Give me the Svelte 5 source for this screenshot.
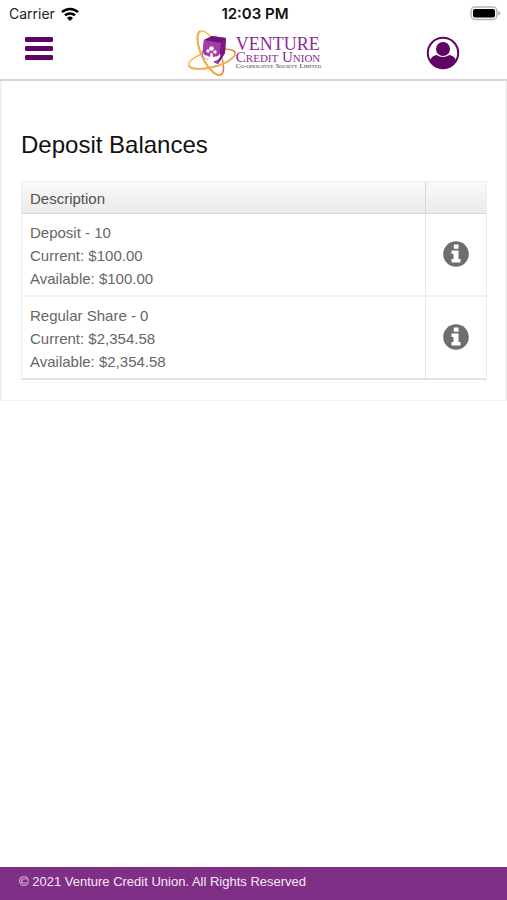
<script>
  const accounts = [
    { name: 'Deposit - 10', current: '$100.00', available: '$100.00' },
    { name: 'Regular Share - 0', current: '$2,354.58', available: '$2,354.58' }
  ];
</script>

<div class="screen">
  <div class="status">
    <div class="carrier">
      <span>Carrier</span>
      <svg width="18" height="14" viewBox="0 0 18 14" aria-hidden="true">
        <g fill="none" stroke="#000" stroke-width="2.5">
          <path d="M1 5.2a11.5 11.5 0 0 1 16 0" />
          <path d="M4 8.4a7.2 7.2 0 0 1 10 0" />
        </g>
        <path d="M9 14 6 10.9a4.4 4.4 0 0 1 6 0z" />
      </svg>
    </div>
    <time>12:03 PM</time>
    <svg class="battery" width="31" height="15" viewBox="0 0 31 15" aria-hidden="true">
      <rect x="1" y="1" width="26" height="12.5" rx="4" fill="#fff" stroke="#b5b5b5" stroke-width="1.5" />
      <rect x="3" y="3" width="22" height="8.5" rx="2" />
      <path d="M28.3 5v4.5q2-.7 2-2.2T28.3 5z" fill="#aaa" />
    </svg>
  </div>

  <header>
    <button class="menu" aria-label="Menu">
      <svg width="28" height="24" viewBox="0 0 28 24">
        <g fill="#610365">
          <rect width="28" height="5" rx="1.3" />
          <rect y="9" width="28" height="5" rx="1.3" />
          <rect y="18" width="28" height="5" rx="1.3" />
        </g>
      </svg>
    </button>
    <a class="brand" href="#home">
      <svg width="50" height="48" viewBox="0 0 50 48" aria-hidden="true">
        <defs>
          <linearGradient id="ring" gradientUnits="userSpaceOnUse" x1="6" y1="4" x2="40" y2="46">
            <stop offset="0" stop-color="#f4cc62" />
            <stop offset=".6" stop-color="#f0a548" />
            <stop offset="1" stop-color="#d9572d" />
          </linearGradient>
        </defs>
        <g fill="none" stroke="url(#ring)" stroke-width="1.5">
          <ellipse cx="22.5" cy="24" rx="9" ry="24" transform="rotate(-25 22.5 24)" />
          <ellipse cx="24" cy="30" rx="24" ry="8" transform="rotate(-15 24 30)" />
        </g>
        <path d="m16 11 8-4 14 2-1 15-7 11-16-7z" fill="#8d2694" />
        <path d="m16 11 8-4 14 2-5 5z" fill="#6d1478" />
        <path d="m33 14 5-5-1 15-7 11z" fill="#7a1983" />
        <path d="m16 11 17 3-3 21-16-7z" fill="#a23ca6" />
        <g fill="#fff">
          <circle cx="23.5" cy="19.5" r="2.3" />
          <circle cx="20" cy="22" r="1.7" />
          <circle cx="27" cy="23" r="1.7" />
          <path d="M15 23q1 4 4 3.500l3 1.500.5-4h2l.5 4 3-.5q3 0 3.500-3l1 2q-1 4-4.500 5l-2 .5-.5 2.500-5-1.500v-2.500q-5-1-5.500-4.500z" />
        </g>
        <g fill="none" stroke-width="2">
          <path d="M24 0A24 8 0 0 1-24 0" transform="translate(24 30) rotate(-15)" stroke="#eeb25c" />
          <path d="M0 24A9 24 0 0 1 0-24" transform="translate(22.5 24) rotate(-25)" stroke="#efad45" />
        </g>
      </svg>
      <span class="wordmark">
        <span class="venture">VENTURE</span>
        <span class="credit">Credit Union</span>
        <span class="society">Co-operative Society Limited</span>
      </span>
    </a>
    <button class="profile" aria-label="Profile">
      <svg width="34" height="34" viewBox="0 0 34 34">
        <circle cx="17" cy="17" r="15.2" fill="#fff" stroke="#610365" stroke-width="2" />
        <circle cx="17" cy="13" r="7" fill="#610365" />
        <path d="M4 25q1-5 6.500-6 6.500 4 13 0 5.500 1 6.500 6-4 7.500-13 7.500T4 25z" fill="#610365" />
      </svg>
    </button>
  </header>

  <main>
    <h1>Deposit Balances</h1>
    <table>
      <thead>
        <tr><th>Description</th><th class="action" aria-label="Details"></th></tr>
      </thead>
      <tbody>
        {#each accounts as account}
          <tr>
            <td>
              <div>{account.name}</div>
              <div>Current: {account.current}</div>
              <div>Available: {account.available}</div>
            </td>
            <td class="action">
              <button aria-label="Details for {account.name}">
                <svg width="26" height="26" viewBox="0 0 26 26">
                  <circle cx="13" cy="13" r="12.8" fill="#6e6e6e" />
                  <path d="M10.8 3.500h4.700v4.200h-4.700zM8.500 9.500h7V18h2v3.500h-9V18h2v-5h-2z" fill="#fff" />
                </svg>
              </button>
            </td>
          </tr>
        {/each}
      </tbody>
    </table>
  </main>

  <footer>© 2021 Venture Credit Union. All Rights Reserved</footer>
</div>

<style>
  :global(body) {
    margin: 0;
    background: #fff;
  }
  .screen {
    min-height: 100vh;
    display: flex;
    flex-direction: column;
    font-family: "Liberation Sans", Arial, sans-serif;
    color: #666;
  }
  button {
    padding: 0;
    border: 0;
    background: none;
    cursor: pointer;
  }
  svg {
    display: block;
  }
  .status {
    display: grid;
    grid-template-columns: 1fr auto 1fr;
    align-items: center;
    height: 27px;
    padding: 0 6px 0 9px;
    font-family: Inter, sans-serif;
    font-size: 14px;
    color: #222;
  }
  .carrier {
    display: flex;
    align-items: center;
    gap: 6px;
  }
  time {
    font-size: 15px;
    font-weight: 600;
    color: #111;
  }
  .battery {
    justify-self: end;
  }
  header {
    display: grid;
    grid-template-columns: 1fr auto 1fr;
    align-items: center;
    height: 52px;
    padding: 0 47px 0 25px;
    border-bottom: 2px solid #dccfd5;
  }
  .menu {
    justify-self: start;
    padding-bottom: 8px;
  }
  .profile {
    justify-self: end;
  }
  .brand {
    display: flex;
    align-items: center;
    margin-left: 24px;
    text-decoration: none;
  }
  .wordmark {
    display: flex;
    flex-direction: column;
    margin-left: -2px;
    font-family: "Liberation Serif", serif;
    white-space: nowrap;
    color: #8c2a91;
  }
  .venture {
    font-size: 18px;
    line-height: 16px;
  }
  .credit {
    font-size: 15px;
    line-height: 10px;
    font-variant: small-caps;
  }
  .society {
    font-size: 7px;
    line-height: 8px;
    font-variant: small-caps;
    color: #333;
  }
  main {
    padding: 49px 18px 20px 19px;
    border: 2px solid #f0f0f0;
    border-top: 0;
    border-bottom-width: 1px;
  }
  h1 {
    margin: 0 0 21px;
    font-size: 24px;
    line-height: 30px;
    font-weight: 400;
    color: #111;
  }
  table {
    width: 100%;
    border-collapse: separate;
    border-spacing: 0;
    border: 1px solid #ececec;
    border-bottom: 2px solid #e2e2e2;
    font-size: 15px;
    line-height: 23px;
  }
  th {
    padding: 5px 8px 3px;
    text-align: left;
    font-weight: 400;
    color: #505050;
    background: linear-gradient(#f9f9f9, #ebebeb);
    border-bottom: 1px solid #dadada;
  }
  td {
    padding: 7px 8px 5px;
  }
  tbody tr + tr td {
    border-top: 2px solid #f0f0f0;
  }
  .action {
    width: 44px;
    border-left: 1px solid #e9e9e9;
  }
  td.action {
    padding: 5px 8px 6px;
  }
  th.action {
    border-left-color: #d8d8d8;
  }
  td button {
    display: block;
    margin: 0 auto;
  }
  footer {
    margin-top: auto;
    padding: 5px 19px 8px;
    font-size: 13px;
    line-height: 20px;
    color: #f6e8f7;
    background: #802f87;
  }
</style>
